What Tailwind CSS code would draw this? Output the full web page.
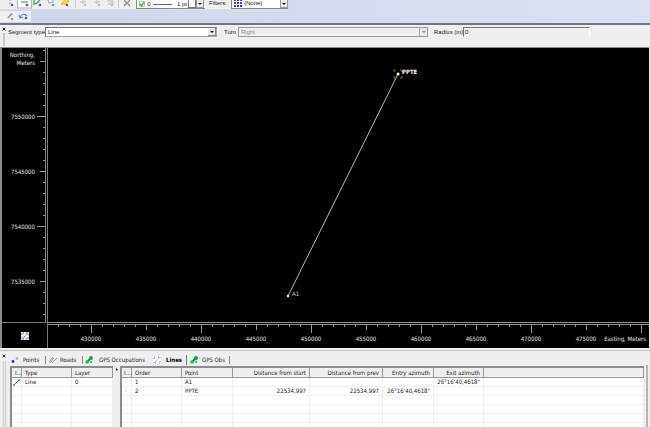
<!DOCTYPE html>
<html lang="en">
<head>
<meta charset="UTF-8" /><meta name="viewport" content="width=device-width, initial-scale=1.0"/>
<title>Survey Office</title><script src="https://cdn.jsdelivr.net/npm/@tailwindcss/browser@4"></script>
</head>
<body class="h-screen overflow-hidden flex flex-col bg-[#efefef] text-[#222] text-[6px] leading-[8px] font-['DejaVu_Sans_Condensed','Open_Sans',sans-serif]">

<!-- toolbars -->
<header class="bg-linear-to-r from-[#cdd6e9] to-[#dbe0f2] border-b-2 border-[#74767e] h-[25px] shrink-0 font-['Liberation_Sans',sans-serif]">
<div class="flex h-[10px] w-[288px] bg-[#efefef] border-b border-[#d9dde6]">
<svg class="w-[136px] h-[9px] shrink-0" viewBox="0 0 136 9" fill="none">
<rect x="17.500" y="-1" width="14" height="9" fill="#fafafa" stroke="#b5b5b5"/>
<path d="M10 0v1M9 3h2" stroke="#8c8cf0"/><circle cx="12" cy="5" r="1.300" fill="#4b4bea"/>
<path d="M21 2h7" stroke="#63b56b" stroke-width="1.300"/><circle cx="27" cy="5" r="1.300" fill="#4b4bea"/>
<path d="M34 0v4l3-1 3-3" stroke="#3fa050" stroke-width="1.300"/><circle cx="40" cy="5" r="1.300" fill="#4b4bea"/>
<path d="M48 0l1 3 4-1v-2" stroke="#a5a5a5"/><circle cx="53" cy="5" r="1.300" fill="#8484e8"/>
<path d="M61 4l3-3h5l-3 3z" fill="#f5e722" stroke="#d8c400"/><circle cx="67" cy="5" r="1.300" fill="#4b4bea"/>
<path d="M75.500 0v8" stroke="#ccc"/>
<path d="M80 2h6M83 0v4M94 2h6M97 0v4M107 1h6v3h-5M109 4l4-3" stroke="#c2c2c2"/>
<circle cx="85" cy="5" r="1.200" fill="#bdbdbd"/><circle cx="99" cy="5" r="1.200" fill="#bdbdbd"/><circle cx="112" cy="5" r="1.200" fill="#bdbdbd"/>
<path d="M118.500 0v8" stroke="#c8c8c8"/><path d="M124 0l6 6M130 0l-6 6" stroke="#8d8d8d" stroke-width="1.200"/>
</svg>
<div class="flex items-center w-[69px] h-[9px] shrink-0 bg-white border-l border-b border-[#8a8a8a] pl-[2px]">
<label class="flex items-center shrink-0"><input type="checkbox" checked aria-label="Layer visible" class="peer sr-only"/>
<svg class="size-[6px] shrink-0" viewBox="0 0 6 6" fill="none"><path d="M.5.500h5v5h-5z" fill="#fff" stroke="#a9c9a9"/><path d="M1 3l1.500 2L5 1" stroke="#1fb52c" stroke-width="1.300"/></svg></label>
<span class="w-[8px] text-center -mt-px shrink-0">0</span>
<span class="w-[19px] h-px bg-[#666] shrink-0"></span>
<span class="w-[15px] text-right -mt-px mr-px whitespace-nowrap shrink-0">1 pt</span>
<button aria-label="Color" class="w-[8px] h-[8px] bg-white border border-[#777] border-t-0 shrink-0"></button>
<button aria-label="Style" class="w-[8px] h-[8px] bg-[#ececec] border border-[#999] border-t-0 flex items-center justify-center shrink-0"><svg class="w-[4px] h-[2px] shrink-0" viewBox="0 0 4 2"><path d="M0 0h4L2 2z" fill="#111"/></svg></button>
</div>
<label for="filters" class="w-[26px] pl-[4px] -mt-px shrink-0">Filters:</label>
<div class="relative grow h-[9px] bg-white border-l border-b border-[#8a8a8a] flex">
<svg class="w-[8px] h-[8px] ml-[2px] shrink-0" viewBox="0 0 8 8"><path d="M0 0h2v1H0zM3 0h2v1H3zM6 0h2v1H6zM0 2h2v2H0zM3 2h2v2H3zM6 2h2v2H6zM0 5h2v2H0zM3 5h2v2H3zM6 5h2v2H6z" fill="#3a3adf"/></svg>
<select id="filters" class="appearance-none grow h-[8px] pl-[2px] leading-[7px] -mt-px"><option>{None}</option></select>
<span class="absolute right-0 top-0 size-[8px] bg-[#ececec] border border-t-0 border-[#999] flex items-center justify-center pointer-events-none"><svg class="w-[4px] h-[2px] shrink-0" viewBox="0 0 4 2"><path d="M0 0h4L2 2z" fill="#111"/></svg></span>
</div>
</div>
<div class="mt-px h-[11px] w-[31px] bg-[#efefef]">
<svg class="w-[31px] h-[11px]" viewBox="0 0 31 11" fill="none">
<path d="M7 7l4-5 2 1-4 4z" fill="#9b9b9b"/><circle cx="12" cy="8" r="1.200" fill="#999"/>
<path d="M20 6q3-5 7-1M19 4l1 3 3-1" stroke="#6b86e8" stroke-width="1.200"/><circle cx="26" cy="7" r="1.300" fill="#4b4bea"/>
</svg>
</div>
</header>

<!-- segment settings -->
<form class="flex h-[22px] shrink-0 pr-[60px] pt-[2px] font-['Liberation_Sans',sans-serif]">
<div class="w-[8px] shrink-0 flex flex-col items-center">
<button type="button" aria-label="Close" class="size-[4px] mr-[1px]"><svg class="size-[4px] block" viewBox="0 0 4 4"><path d="M.5.500l3 3M3.500.500l-3 3" stroke="#222"/></svg></button>
<span class="w-[2px] h-[13px] mt-[2px] border border-[#c8c8c8]"></span>
</div>
<label for="segment" class="w-[37px] shrink-0 mt-px whitespace-nowrap">Segment type</label>
<div class="relative grow-172 basis-0 h-[10px]">
<select id="segment" class="appearance-none w-full h-[10px] bg-white border border-[#a6a6a6] border-t-[#777] border-l-[#777] pl-[2px] leading-[8px] block"><option>Line</option><option>Arc</option></select>
<span class="absolute right-px top-px size-[8px] bg-[#e8e8e8] border-r border-b border-[#888] flex items-center justify-center pointer-events-none"><svg class="w-[4px] h-[2px]" viewBox="0 0 4 2"><path d="M0 0h4L2 2z" fill="#111"/></svg></span>
</div>
<label for="turn" class="w-[21px] pl-[7px] shrink-0 mt-px">Turn</label>
<div class="relative grow-190 basis-0 h-[10px]">
<select id="turn" disabled class="appearance-none w-full h-[10px] border border-[#999] pl-[2px] leading-[8px] text-[#888] opacity-100 block"><option>Right</option><option>Left</option></select>
<span class="absolute right-px top-px size-[8px] bg-[#e8e8e8] border-l border-[#aaa] flex items-center justify-center pointer-events-none"><svg class="w-[4px] h-[2px]" viewBox="0 0 4 2"><path d="M0 0h4L2 2z" fill="#888"/></svg></span>
</div>
<label for="radius" class="w-[35px] pl-[6px] shrink-0 mt-px whitespace-nowrap">Radius (m)</label>
<div class="grow-127 basis-0 min-w-0"><input id="radius" type="text" value="0" class="block w-full h-[10px] border border-transparent border-t-[#777] border-l-[#777] border-r-white pl-px pb-px leading-[8px]"/></div>
</form>

<!-- map view with rulers -->
<main class="grid grid-cols-[46px_1fr] grid-rows-[274px_26px] shrink-0 bg-black border-t border-l-2 border-[#8c8c8c] mr-px">
<svg class="w-[46px] h-[274px]" viewBox="0 0 46 274">
<path id="northTicks" stroke="#999" fill="none"/>
<path d="M43.500 0v274M45.500 0v274" stroke="#808080"/>
<g fill="#e6e6e6" text-anchor="end"><text x="33" y="9">Northing,</text><text x="33" y="17">Meters</text>
<text x="33" y="71">7550000</text><text x="33" y="126">7545000</text><text x="33" y="181">7540000</text><text x="33" y="236">7535000</text></g>
</svg>
<svg class="w-full h-[274px]">
<path d="M240 248L350 26" stroke="#b5b5b5" fill="none"/>
<circle cx="240" cy="248" r="1.200" fill="#fff"/><circle cx="350" cy="26" r="1.500" fill="#fff"/>
<path d="M346 24v-2h2M352 22h2v2M354 28v2h-2M348 30h-2v-2" stroke="#a85f16" fill="none"/>
<text x="244" y="248" fill="#ccc">A1</text><text x="354" y="26" fill="#fff" class="font-bold">PPTE</text>
</svg>
<div class="border-t border-r border-[#777] flex items-center justify-center">
<button aria-label="Zoom extents" class="size-[8px] bg-[#eee]"><svg class="size-[8px] block" viewBox="0 0 8 8"><path d="M1 3V1h2M5 1h2v2M7 5v2H5M3 7H1V5M2.500 5.500l3-3" stroke="#6a6a96" fill="none" stroke-dasharray="2 1"/></svg></button>
</div>
<svg class="w-full h-[26px]">
<path d="M0 .500h1000M0 2.500h1000" stroke="#909090"/>
<path id="eastTicks" stroke="#999" fill="none"/>
<g fill="#e6e6e6" text-anchor="middle"><text x="43" y="19">430000</text><text x="98" y="19">435000</text><text x="153" y="19">440000</text><text x="208" y="19">445000</text><text x="263" y="19">450000</text><text x="318" y="19">455000</text><text x="373" y="19">460000</text><text x="428" y="19">465000</text><text x="483" y="19">470000</text><text x="538" y="19">475000</text></g>
<text x="598" y="19" fill="#e6e6e6" text-anchor="end">Easting, Meters</text>
</svg>
</main>

<!-- data panel -->
<section class="grow flex border-t border-[#c4c4c4] mt-[2px] pt-[2px] pr-[5px] min-h-0 overflow-hidden">
<div class="w-[10px] shrink-0 flex flex-col">
<button aria-label="Close" class="size-[4px] ml-[2px] mt-px"><svg class="size-[4px] block" viewBox="0 0 4 4"><path d="M.5.500l3 3M3.500.500l-3 3" stroke="#222"/></svg></button>
<span class="w-[3px] grow ml-[3px] mt-[3px] border-x border-[#ccc]"></span>
</div>
<div class="grow min-w-0 flex flex-col">
<nav class="flex h-[13px] shrink-0 items-center whitespace-nowrap">
<button class="flex items-center w-[36px] h-[8px] border-r border-[#888] pl-px shrink-0"><svg class="size-[8px] mr-[4px] shrink-0" viewBox="0 0 8 8"><circle cx="2" cy="5.500" r="1.400" fill="#2a2af0"/><circle cx="6" cy="2.500" r=".9" fill="none" stroke="#7a7af0" stroke-width=".7"/></svg>Points</button>
<button class="flex items-center w-[37px] h-[8px] border-r border-[#888] pl-[3px] shrink-0"><svg class="size-[8px] mr-[3px] shrink-0" viewBox="0 0 8 8"><path d="M0 6l4-5M3 7l5-5M1 7l4-5" stroke="#999" fill="none"/></svg>Roads</button>
<button class="flex items-center w-[70px] h-[8px] pl-[2px] shrink-0"><svg class="size-[8px] mr-[6px] shrink-0" viewBox="0 0 8 8"><path d="M2 6l4-4" stroke="#168a3c" stroke-width="2"/><circle cx="2" cy="6" r="1.800" fill="#21c64a"/><circle cx="6" cy="2" r="1.900" fill="#1b9c45"/><circle cx="6" cy="6" r="1.300" fill="#39d0c8"/></svg>GPS Occupations</button>
<button class="flex items-center w-[34px] h-[10px] border-r border-[#777] font-bold text-black shrink-0"><svg class="size-[8px] mr-[5px] bg-white shrink-0" viewBox="0 0 8 8"><path d="M1 3V1h2M5 1h2v2M7 5v2H5M3 7H1V5M2 6l4-4" stroke="#7c7cc4" fill="none" stroke-dasharray="1 1"/></svg>Lines</button>
<button class="flex items-center w-[43px] h-[8px] border-r border-[#888] pl-[3px] shrink-0"><svg class="size-[8px] mr-[4px] shrink-0" viewBox="0 0 8 8"><path d="M2 6l4-4" stroke="#168a3c" stroke-width="2"/><circle cx="2" cy="6" r="1.800" fill="#21c64a"/><circle cx="6" cy="2" r="1.900" fill="#1b9c45"/><circle cx="6" cy="6" r="1.300" fill="#39d0c8"/></svg>GPS Obs</button>
</nav>
<div class="flex grow min-h-0 bg-white overflow-hidden">
<div class="w-[103px] shrink-0 border-t-2 border-l-2 border-[#8c8c8c]">
<table class="w-full table-fixed border-separate border-spacing-0 [&_th]:font-normal [&_th]:text-left [&_th]:bg-[#efefef] [&_th]:border-b [&_th]:border-r [&_th]:border-[#999] [&_th]:pl-[3px] [&_th]:h-[10px] [&_td]:h-[9px] [&_td]:border-b [&_td]:border-r [&_td]:border-[#efefef] [&_td]:pl-[3px] [&_th]:leading-[8px] [&_td]:leading-[8px]">
<colgroup><col class="w-[10px]"/><col class="w-[50px]"/><col/></colgroup>
<thead><tr><th>I...</th><th>Type</th><th>Layer</th></tr></thead>
<tbody>
<tr><td class="!pl-px"><svg class="size-[7px] block" viewBox="0 0 7 7"><path d="M1 6l5-5" stroke="#666"/><path d="M0 6h2M5 1h2" stroke="#4b4b8a"/></svg></td><td>Line</td><td>0</td></tr>
<tr><td></td><td></td><td></td></tr><tr><td></td><td></td><td></td></tr><tr><td></td><td></td><td></td></tr><tr><td></td><td></td><td></td></tr><tr><td></td><td></td><td></td></tr>
</tbody></table>
</div>
<div class="w-[7px] shrink-0 bg-[#efefef] pl-[3px] pt-[2px]"><svg class="w-[2px] h-[3px] block" viewBox="0 0 2 3"><path d="M0 0l2 1.500L0 3z" fill="#111"/></svg></div>
<div class="grow min-w-0 border-t-2 border-l-2 border-[#8c8c8c]">
<table class="w-full table-fixed border-separate border-spacing-0 [&_th]:font-normal [&_th]:text-left [&_th]:bg-[#efefef] [&_th]:border-b [&_th]:border-r [&_th]:border-[#999] [&_th]:px-[3px] [&_th]:h-[10px] [&_td]:h-[9px] [&_td]:border-b [&_td]:border-r [&_td]:border-[#efefef] [&_td]:px-[3px] [&_th]:leading-[8px] [&_td]:leading-[8px] [&_:is(th,td):nth-child(n+4)]:text-right whitespace-nowrap">
<colgroup><col class="w-[10px]"/><col class="w-[50px]"/><col class="w-[51px]"/><col class="w-[77px]"/><col class="w-[73px]"/><col class="w-[51px]"/><col class="w-[50px]"/><col/></colgroup>
<thead><tr><th class="!px-[2px]">I...</th><th>Order</th><th>Point</th><th>Distance from start</th><th>Distance from prev</th><th>Entry azimuth</th><th>Exit azimuth</th><th></th></tr></thead>
<tbody>
<tr><td>·</td><td>1</td><td>A1</td><td></td><td></td><td></td><td>26°16'40,4618"</td><td></td></tr>
<tr><td>·</td><td>2</td><td>PPTE</td><td>22534,997</td><td>22534,997</td><td>26°16'40,4618"</td><td></td><td></td></tr>
<tr><td></td><td></td><td></td><td></td><td></td><td></td><td></td><td></td></tr><tr><td></td><td></td><td></td><td></td><td></td><td></td><td></td><td></td></tr><tr><td></td><td></td><td></td><td></td><td></td><td></td><td></td><td></td></tr><tr><td></td><td></td><td></td><td></td><td></td><td></td><td></td><td></td></tr>
</tbody></table>
</div>
</div>
</div>
<div class="w-[4px] mt-[12px] -mr-[3px] border-r-2 border-[#b5b5b5] bg-[#efefef] shrink-0"></div>
</section>

<script>
// one minor tick per 1000 m (11px), medium every 5000 m, long every 10000 m
function tickLength(i) { return i % 10 === 0 ? 8 : i % 5 === 0 ? 5 : 2; }
let north = "", east = "";
for (let i = -6; i <= 18; i++) north += `M43 ${68.5 + i * 11}h-${tickLength(i)}`;
for (let i = -3; i <= 50; i++) east += `M${43.5 + i * 11} 3v${tickLength(i)}`;
document.getElementById("northTicks").setAttribute("d", north);
document.getElementById("eastTicks").setAttribute("d", east);
</script></body></html>
